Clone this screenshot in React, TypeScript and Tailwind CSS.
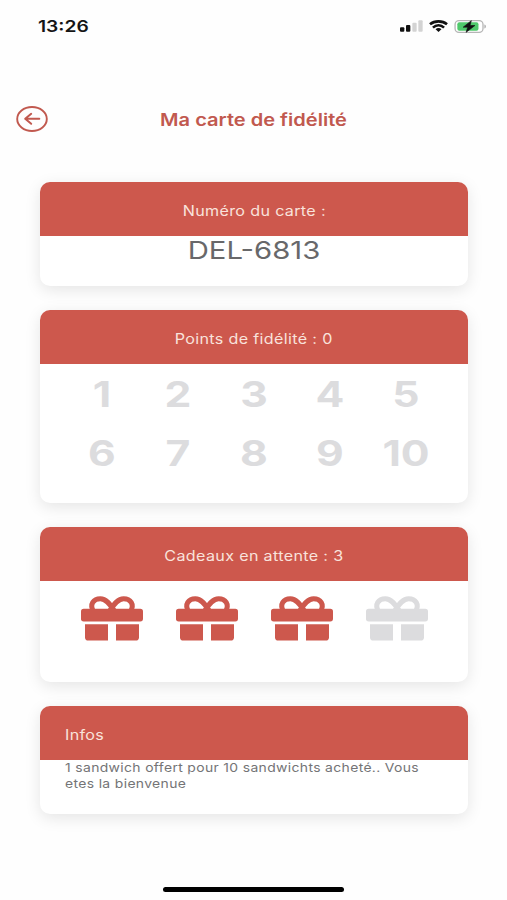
import type { ReactNode } from 'react';
import clsx from 'clsx';

const points = [1, 2, 3, 4, 5, 6, 7, 8, 9, 10];
const gifts = [true, true, true, false];

function StatusBar() {
  return (
    <div className="flex h-[52px] items-center justify-between pl-[38px] pr-5">
      <span className="origin-left scale-x-[1.2] text-base font-semibold text-[#151515]">13:26</span>
      <div className="flex items-center gap-[6px]">
        {/* Signal */}
        <svg viewBox="0 0 69 36" className="h-3 w-[23px]">
          <rect x="0" y="22" width="13" height="13" rx="3" fill="#111" />
          <rect x="18" y="15" width="13" height="20" rx="3" fill="#111" />
          <rect x="37" y="8" width="13" height="27" rx="3" fill="#d3d3d3" />
          <rect x="55" y="1" width="13" height="34" rx="3" fill="#d3d3d3" />
        </svg>
        {/* Wifi */}
        <svg viewBox="0 0 58 36" className="h-3 w-[19px]" fill="none" stroke="#111" strokeWidth="8">
          <path d="M3 13 C17 1 41 1 55 13" />
          <path d="M12 23 C22 14 36 14 46 23" />
          <path d="M20 28 C25 23 33 23 38 28 L29 36 Z" fill="#111" stroke="none" />
        </svg>
        {/* Battery */}
        <svg viewBox="0 0 99 40" className="h-[13px] w-[33px]">
          <rect x="2" y="2" width="86" height="36" rx="12" fill="#fff" stroke="#b5b5b5" strokeWidth="4" />
          <rect x="9" y="7" width="65" height="26" rx="6" fill="#4fc96b" />
          <path d="M92 14 C99 15 99 25 92 26 Z" fill="#b5b5b5" />
          <path d="M52 2 L27 22 H41 L36 38 L63 17 H48 Z" fill="#111" stroke="#111" strokeWidth="2" />
        </svg>
      </div>
    </div>
  );
}

function BackIcon() {
  return (
    <svg viewBox="0 0 32 26" className="h-[26px] w-8" fill="none" stroke="#c1594f" strokeWidth="1.9">
      <ellipse cx="16" cy="13" rx="14.8" ry="12" />
      <path d="M23.3 12.8 H9.5 M15.2 7.8 L9.2 12.8 L15.2 17.8" strokeWidth="2" strokeLinecap="round" strokeLinejoin="round" />
    </svg>
  );
}

function GiftIcon({ active }: { active: boolean }) {
  return (
    <svg viewBox="0 0 186 134" className={clsx('h-[45px] w-[62px]', active ? 'text-[#cd584d]' : 'text-[#dcdcde]')}>
      <g fill="none" stroke="currentColor" strokeWidth="15">
        <path d="M38 46 C24 24 38 7.5 58 7.5 C75 7.5 86 22 100 44" />
        <path d="M148 46 C162 24 148 7.5 128 7.5 C111 7.5 100 22 86 44" />
      </g>
      <g fill="currentColor">
        <rect x="0" y="38" width="186" height="38" rx="8" />
        <path d="M12 84 H81 V133 H22 Q12 133 12 123 Z" />
        <path d="M105 84 H174 V123 Q174 133 164 133 H105 Z" />
      </g>
    </svg>
  );
}

type CardProps = {
  title: string;
  className: string;
  titleClassName?: string;
  children: ReactNode;
};

function Card({ title, className, titleClassName = 'justify-center *:scale-x-[1.15]', children }: CardProps) {
  return (
    <section className={clsx('overflow-hidden rounded-[10px] bg-white shadow-[0_4px_16px_rgba(0,0,0,0.1)]', className)}>
      <header className={clsx('flex h-[54px] items-center bg-[#cd584d] px-[25px] pt-1', titleClassName)}>
        <h2 className="whitespace-nowrap text-sm tracking-[0.3px] text-[#f9e3dc]">{title}</h2>
      </header>
      {children}
    </section>
  );
}

export default function App() {
  return (
    <main className="flex h-[900px] w-[507px] flex-col overflow-hidden bg-[#fefefe] font-['Inter',sans-serif]">
      <StatusBar />

      <div className="mt-[53px] grid h-7 grid-cols-[32px_1fr_32px] items-center px-4">
        <BackIcon />
        <h1 className="scale-x-[1.18] whitespace-nowrap pt-[3px] text-center text-[17px] font-semibold text-[#c1594f]">
          Ma carte de fidélité
        </h1>
      </div>

      <div className="mt-[48.5px] flex flex-col gap-6 pl-10 pr-[39px]">
        <Card title="Numéro du carte :" className="h-[104.5px]">
          <p className="scale-x-[1.22] pt-px text-center text-[24px] leading-[27px] text-[#68686a]">DEL-6813</p>
        </Card>

        <Card title="Points de fidélité : 0" className="h-[193px]">
          <div className="grid auto-rows-[59px] grid-cols-5 px-6 pt-[1px]">
            {points.map((point) => (
              <span key={point} className="scale-x-[1.22] text-center text-[35px] font-bold leading-[59px] text-[#dcdcde]">
                {point}
              </span>
            ))}
          </div>
        </Card>

        <Card title="Cadeaux en attente : 3" className="h-[154.5px]">
          <div className="grid grid-cols-4 justify-items-center px-6 pt-[15px]">
            {gifts.map((active, i) => (
              <GiftIcon key={i} active={active} />
            ))}
          </div>
        </Card>

        <Card title="Infos" className="h-[108px]" titleClassName="*:origin-left *:scale-x-[1.15]">
          <div className="pl-[25px]">
            <p className="origin-left scale-x-[1.16] whitespace-nowrap text-[12px] leading-4 tracking-[0.3px] text-[#747476]">
              1 sandwich offert pour 10 sandwichts acheté.. Vous
              <br />
              etes la bienvenue
            </p>
          </div>
        </Card>
      </div>

      {/* Home indicator */}
      <div className="mb-[8px] mt-auto h-[5px] w-[181px] self-center rounded-full bg-black" />
    </main>
  );
}
